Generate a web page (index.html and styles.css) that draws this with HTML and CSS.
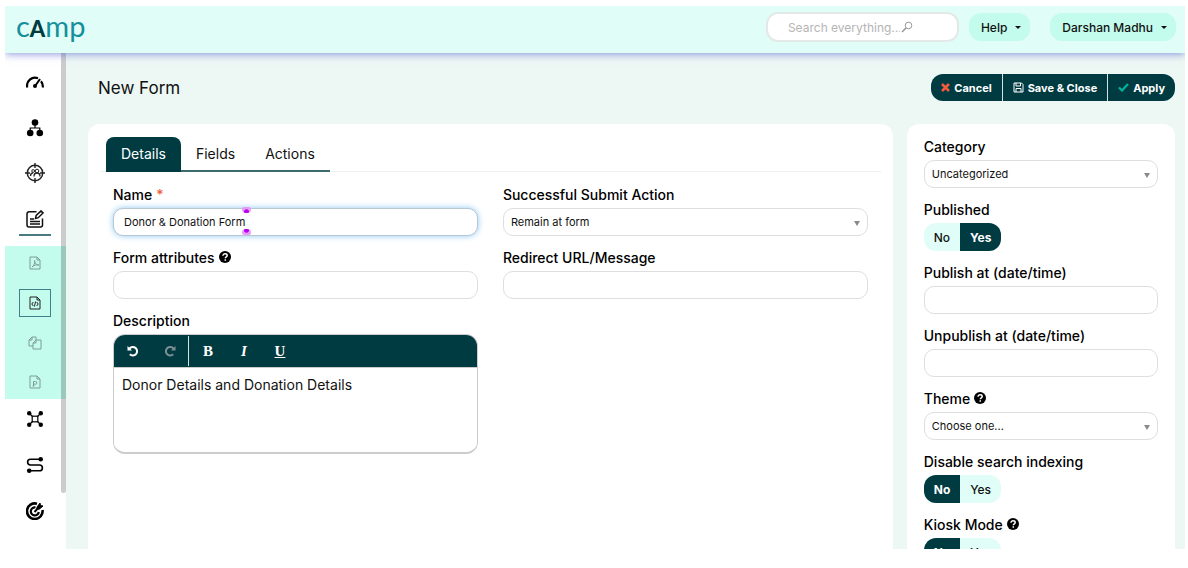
FILE: index.html
```html
<!DOCTYPE html>
<html lang="en">
<head>
<meta charset="utf-8">
<title>New Form</title>
<link rel="stylesheet" href="styles.css">
</head>
<body>
<svg class="sprite" aria-hidden="true">
  <symbol id="help" viewBox="0 0 12 12"><circle cx="6" cy="6" r="6" fill="#000"/><path d="M4 4.700C4 3.300 5 2.800 6.100 2.800c1.200 0 2.100.7 2.100 1.700C8.200 5.900 6.300 5.900 6.300 7.300M6.300 8.300v1.400" fill="none" stroke="#fff" stroke-width="1.500"/></symbol>
  <symbol id="page" viewBox="0 0 14 14"><path d="M2 1h7l3 3v9H2zM9 1v3h3" fill="none" stroke="currentColor"/></symbol>
</svg>
<div class="app">
  <header class="topbar">
    <a class="logo" href="#" aria-label="cAmp">c<b>A</b>mp</a>
    <div class="search">
      <input type="text" aria-label="Search everything" placeholder="Search everything...">
      <svg width="12" height="12" viewBox="0 0 12 12" fill="none" stroke="#999"><circle cx="7.500" cy="4.500" r="3.300"/><path d="M5 7 1 11" stroke-width="1.600"/></svg>
    </div>
    <button class="menu">Help <i class="caret"></i></button>
    <button class="menu user">Darshan Madhu <i class="caret"></i></button>
  </header>
  <div class="body">
    <nav class="sidebar" aria-label="Main">
      <div class="nav">
        <a href="#" aria-label="Dashboard"><svg width="18" height="18" viewBox="0 0 18 18" fill="none" stroke="#000"><path d="M1.300 13.500A8 8 0 0 1 12 4.200M15 7.200a8 8 0 0 1 1.700 6.300" stroke-width="2.200"/><path d="M14 5 9.500 11.500" stroke-width="2"/><circle cx="9" cy="12" r="2" fill="#000" stroke="none"/></svg></a>
        <a href="#" aria-label="Segments"><svg width="18" height="18" viewBox="0 0 18 18"><circle cx="9" cy="3.500" r="3.300"/><circle cx="4.200" cy="14" r="3.300"/><circle cx="13.800" cy="14" r="3.300"/><path d="M9 5v4M4.200 13V9h9.600v4" fill="none" stroke="#000" stroke-width="1.200"/></svg></a>
        <a href="#" aria-label="Contacts"><svg width="20" height="20" viewBox="0 0 20 20" fill="none" stroke="#222"><circle cx="10" cy="10" r="7.700" stroke-width="1.500"/><path d="M10 0v5M10 15v5M0 10h5M15 10h5" stroke-width="1.400"/><circle cx="8.200" cy="8" r="1.400"/><circle cx="12" cy="8" r="1.800"/><path d="M5.500 13q0-3 2.600-3.200M9 13.500q0-3.500 3-3.500t3 3.500" stroke-width="1.300"/></svg></a>
        <a class="active" href="#" aria-label="Components"><svg width="18" height="18" viewBox="0 0 18 18" fill="none" stroke="#111" stroke-width="1.500"><path d="M10.500 1.800H3a2 2 0 0 0-2 2V15a2 2 0 0 0 2 2h11.500a2 2 0 0 0 2-2V8.500M4 9h4M4 11.500h10M4 14h10"/><path d="m9.500 8.500.7-3L15 .9l2 2-4.700 4.800z"/></svg></a>
      </div>
      <div class="subnav">
        <a href="#" aria-label="Assets"><svg width="14" height="14"><use href="#page"/><path d="M4 11c2-1 3-4 2.600-6.500C7 8 9 9 11 9 8 8.600 6 9 4 11z" fill="none" stroke="currentColor"/></svg></a>
        <a class="current" href="#" aria-label="Forms"><svg width="14" height="14"><use href="#page"/><path d="M5.300 6 3.800 8l1.500 2M8.700 6l1.500 2-1.500 2M7.600 5.500l-1.200 5" fill="none" stroke="currentColor"/></svg></a>
        <a href="#" aria-label="Landing pages"><svg width="14" height="14" viewBox="0 0 14 14" fill="none" stroke="currentColor"><path d="M5 10H1V4l3-3h4v3M4 1v3H1M5 13V7l3-3h5v9zM8 4v3H5"/></svg></a>
        <a href="#" aria-label="Pages"><svg width="14" height="14"><use href="#page"/><path d="M5.500 11V6.500h2a1.300 1.300 0 0 1 0 2.700h-2M4.500 11h2" fill="none" stroke="currentColor"/></svg></a>
      </div>
      <div class="nav lower">
        <a href="#" aria-label="Campaigns"><svg width="18" height="18" viewBox="0 0 18 18"><path d="m3 3 12 12M15 3 3 15" stroke="#000" stroke-width="1.300"/><rect x="6.200" y="6.200" width="5.600" height="5.600" fill="#fff" stroke="#000" stroke-width="1.200"/><circle cx="3.200" cy="3.200" r="2.200"/><circle cx="14.800" cy="3.200" r="2.200"/><circle cx="3.200" cy="14.800" r="2.200"/><circle cx="14.800" cy="14.800" r="2.200"/></svg></a>
        <a href="#" aria-label="Journeys"><svg width="18" height="18" viewBox="0 0 18 18"><path d="M15 3.200H4.500a2.900 2.900 0 0 0 0 5.800h9a2.900 2.900 0 0 1 0 5.800H3" fill="none" stroke="#000" stroke-width="1.600"/><circle cx="14.700" cy="3.200" r="2.300"/><circle cx="3.200" cy="14.800" r="2.300"/></svg></a>
        <a href="#" aria-label="Goals"><svg width="18" height="18" viewBox="0 0 18 18" fill="none" stroke="#000"><path d="M11 1.700A7.800 7.800 0 1 0 16.500 8" stroke-width="2.600"/><path d="M9.500 5.500A4 4 0 1 0 12.800 10" stroke-width="2.200"/><path d="M8.500 10 14 4" stroke-width="2"/><path d="M11 5 14 1l.5 2.500L17 4l-3.500 3-2.500.3z" fill="#000"/></svg></a>
      </div>
      <span class="scroll"></span>
    </nav>
    <main class="main">
      <div class="heading">
        <h1>New Form</h1>
        <div class="actions">
          <button><svg width="9" height="9" viewBox="0 0 9 9"><path d="m1 1 7 7M8 1 1 8" stroke="#f4583f" stroke-width="2.600"/></svg>Cancel</button>
          <button><svg width="11" height="11" viewBox="0 0 11 11" fill="none" stroke="#fff"><path d="M1 1h7.500L10 2.500V10H1zM3 1v3h4.500V1M3 10V6.500h5V10"/></svg>Save &amp; Close</button>
          <button><svg width="11" height="9" viewBox="0 0 11 9"><path d="m1 4.500 3 3L10 1" fill="none" stroke="#00b49c" stroke-width="2.200"/></svg>Apply</button>
        </div>
      </div>
      <form class="columns">
        <section class="card editor-card">
          <div class="tabs" role="tablist">
            <button type="button" class="on" role="tab">Details</button>
            <button type="button" role="tab">Fields</button>
            <button type="button" role="tab">Actions</button>
          </div>
          <div class="fields">
            <div class="stack">
              <div class="field">
                <label for="name">Name <span class="req">*</span></label>
                <div class="focus"><input id="name" type="text" value="Donor &amp; Donation Form">
                  <span class="mark"></span><span class="mark low"></span></div>
              </div>
              <div class="field">
                <label for="attrs">Form attributes <svg class="q"><use href="#help"/></svg></label>
                <input id="attrs" type="text">
              </div>
              <div class="field">
                <label for="desc">Description</label>
                <div class="rich">
                  <div class="tools">
                    <button type="button" aria-label="Undo"><svg width="12" height="12" viewBox="0 0 12 12" fill="none" stroke="#fff"><path d="M2.300 3.700A4.300 4.300 0 1 1 2.800 9.300" stroke-width="2"/><path d="M.5 1v4.500H5z" fill="#fff" stroke="none"/></svg></button>
                    <button type="button" aria-label="Redo"><svg width="12" height="12" viewBox="0 0 12 12" fill="none" stroke="#7d8f92"><path d="M9.700 3.700A4.300 4.300 0 1 0 9.200 9.300" stroke-width="2"/><path d="M11.500 1v4.500H7z" fill="#7d8f92" stroke="none"/></svg></button>
                    <span class="sep"></span>
                    <button type="button"><b>B</b></button>
                    <button type="button"><b><i>I</i></b></button>
                    <button type="button"><b><u>U</u></b></button>
                  </div>
                  <textarea id="desc">Donor Details and Donation Details</textarea>
                </div>
              </div>
            </div>
            <div class="stack">
              <div class="field">
                <label for="act">Successful Submit Action</label>
                <div class="pick"><select id="act"><option>Remain at form</option></select></div>
              </div>
              <div class="field">
                <label for="redirect">Redirect URL/Message</label>
                <input id="redirect" type="text">
              </div>
            </div>
          </div>
        </section>
        <section class="card side-card stack">
          <div class="field">
            <label for="cat">Category</label>
            <div class="pick"><select id="cat"><option>Uncategorized</option></select></div>
          </div>
          <div class="field" role="group" aria-labelledby="pub">
            <span class="label" id="pub">Published</span>
            <div class="toggle"><label><input type="radio" name="pub">No</label><label><input type="radio" name="pub" checked>Yes</label></div>
          </div>
          <div class="field">
            <label for="from">Publish at (date/time)</label>
            <input id="from" type="text">
          </div>
          <div class="field">
            <label for="to">Unpublish at (date/time)</label>
            <input id="to" type="text">
          </div>
          <div class="field">
            <label for="theme">Theme <svg class="q"><use href="#help"/></svg></label>
            <div class="pick"><select id="theme"><option>Choose one...</option></select></div>
          </div>
          <div class="field" role="group" aria-labelledby="idx">
            <span class="label" id="idx">Disable search indexing</span>
            <div class="toggle"><label><input type="radio" name="idx" checked>No</label><label><input type="radio" name="idx">Yes</label></div>
          </div>
          <div class="field" role="group" aria-labelledby="kiosk">
            <span class="label" id="kiosk">Kiosk Mode <svg class="q"><use href="#help"/></svg></span>
            <div class="toggle"><label><input type="radio" name="kiosk" checked>No</label><label><input type="radio" name="kiosk">Yes</label></div>
          </div>
        </section>
      </form>
    </main>
  </div>
</div>
</body>
</html>
```
FILE: styles.css
```css
* { box-sizing: border-box; }
body { margin: 0; padding: 6px 3px 19px 5px; background: #fff; color: #111; font-family: Inter, "Liberation Sans", sans-serif; font-size: 14px; }
button, input, select, textarea { font: inherit; color: inherit; }
button { border: 0; cursor: pointer; white-space: nowrap; }
.sprite { position: absolute; width: 0; height: 0; }
.app { display: flex; flex-direction: column; height: calc(100vh - 25px); overflow: hidden; }

.topbar { display: flex; align-items: center; flex: none; height: 47px; padding: 0 9px 5px 11px; background: #e0fef7; box-shadow: 0 1px 8px rgba(60, 80, 200, .6); z-index: 1; }
.logo { margin-right: auto; color: #158f9c; font: 400 29px/36px Lato, sans-serif; text-decoration: none; }
.logo b { color: #003b42; font-weight: 900; font-size: 22px; }
.search { display: flex; align-items: center; gap: 1px; width: 193px; height: 30px; padding: 0 20px; border: 2px solid #e3e9e7; border-radius: 12px; background: #fff; }
.search input { width: 112px; padding: 0; border: 0; outline: 0; font-size: 12px; }
.search input::placeholder { color: #b5b5b5; }
.menu { display: flex; align-items: center; gap: 8px; height: 28px; margin-left: 10px; padding: 0 9px 0 12px; border-radius: 12px; background: #c3fbec; font-size: 12px; font-weight: 500; }
.menu.user { margin-left: 20px; }
.caret { border: 3px solid transparent; border-top-color: #111; border-bottom: 0; }

.body { display: flex; flex: 1; min-height: 0; }
.sidebar { position: relative; flex: none; width: 61px; padding-top: 15px; }
.nav { display: grid; justify-items: center; gap: 15px; width: 60px; }
.nav a { display: grid; place-items: center; width: 32px; height: 30px; color: #000; }
.nav a.active { height: 33px; border-bottom: 2px solid #4a7b82; }
.nav.lower { gap: 16px; }
.subnav { display: grid; justify-items: center; gap: 13px; margin: 10px 0 5px; padding: 4px 1px 4px 0; background: #c3fbec; }
.subnav a { display: grid; place-items: center; width: 32px; height: 26px; color: #7f9c95; }
.subnav .current { height: 28px; border: 1px solid #3f8189; color: #222; }
.scroll { position: absolute; top: 0; right: 0; width: 5px; height: 440px; border-radius: 0 0 3px 3px; background: rgba(0, 0, 0, .2); }

.main { flex: 1; min-width: 0; display: flex; flex-direction: column; padding: 21px 10px 0 22px; background: #edf7f4; }
.heading { display: flex; justify-content: space-between; align-items: center; height: 27px; padding-left: 10px; }
h1 { margin: 0; font-size: 17px; font-weight: 400; }
.actions { display: flex; border-radius: 12px; overflow: hidden; }
.actions button { display: flex; align-items: center; gap: 4px; height: 27px; padding: 0 10px; background: #003b42; color: #fff; font-size: 11px; font-weight: 700; }
.actions button + button { border-left: 1px solid #d5e4e2; }
.columns { display: grid; grid-template-columns: 3fr 1fr; gap: 14px; flex: 1; min-height: 0; margin-top: 23px; }
.card { min-width: 0; border-radius: 12px 12px 0 0; background: #fff; }
.editor-card { padding: 13px 12px; }
.side-card { padding: 12px 17px; }

.tabs { display: flex; height: 35px; padding-left: 6px; box-shadow: inset 0 -1px #f0f0f0; }
.tabs button { padding: 0 15px; border-bottom: 2px solid #3c6b70; background: none; }
.tabs .on { border-color: #003b42; border-radius: 8px 8px 0 0; background: #003b42; color: #fff; }
.fields { display: grid; grid-template-columns: 1fr 1fr; gap: 25px; padding: 12px 13px; }
.stack { display: flex; flex-direction: column; gap: 11px; min-width: 0; }
.field { display: grid; gap: 4px; }
.field > label, .label { display: flex; align-items: center; gap: 4px; height: 20px; color: #000; font-weight: 500; }
.req { color: #f4583f; }
.q { width: 12px; height: 12px; }
.field input[type="text"], .pick select { width: 100%; height: 28px; padding: 0 10px; border: 1px solid #dedede; border-radius: 10px; outline: 0; background: #fff; font-size: 11px; }
.focus { position: relative; }
.focus input[type="text"] { display: block; border-color: #b9c7d0; box-shadow: 0 0 6px #8cc8f5; }
.mark { position: absolute; left: 129px; top: -1px; width: 9px; height: 6px; border-radius: 3px 3px 5px 5px; background: radial-gradient(circle at 50% 80%, #b800f0 2px, #e79af8 3px); }
.mark.low { top: 21px; transform: rotate(180deg); }
.pick { position: relative; }
.pick select { display: block; padding: 0 7px; appearance: none; }
.pick::after { content: ""; position: absolute; right: 8px; top: 13px; border: 3px solid transparent; border-top: 5px solid #8a8a8a; border-bottom: 0; pointer-events: none; }

.rich { overflow: hidden; border: 1px solid #ccc; border-bottom-width: 2px; border-radius: 12px; }
.tools { display: flex; align-items: center; height: 33px; background: #003b42; border-bottom: 1px solid #ccc; }
.tools button { display: grid; place-items: center; width: 36px; height: 30px; padding: 0; background: none; color: #fff; font: 15px "Liberation Serif", serif; }
.tools button:first-child { width: 38px; }
.sep { width: 1px; height: 30px; margin-right: 1px; background: #d5e4e2; }
.rich textarea { display: block; width: 100%; height: 84px; padding: 8px; border: 0; outline: 0; resize: none; line-height: 17px; }

.toggle { display: flex; width: max-content; height: 28px; overflow: hidden; border-radius: 12px; background: #e0fef7; }
.toggle label { display: grid; place-items: center; padding: 0 10px; font-size: 12px; font-weight: 500; }
.toggle label:has(:checked) { background: #003b42; color: #fff; font-weight: 700; }
.toggle input { position: absolute; opacity: 0; pointer-events: none; }
```
